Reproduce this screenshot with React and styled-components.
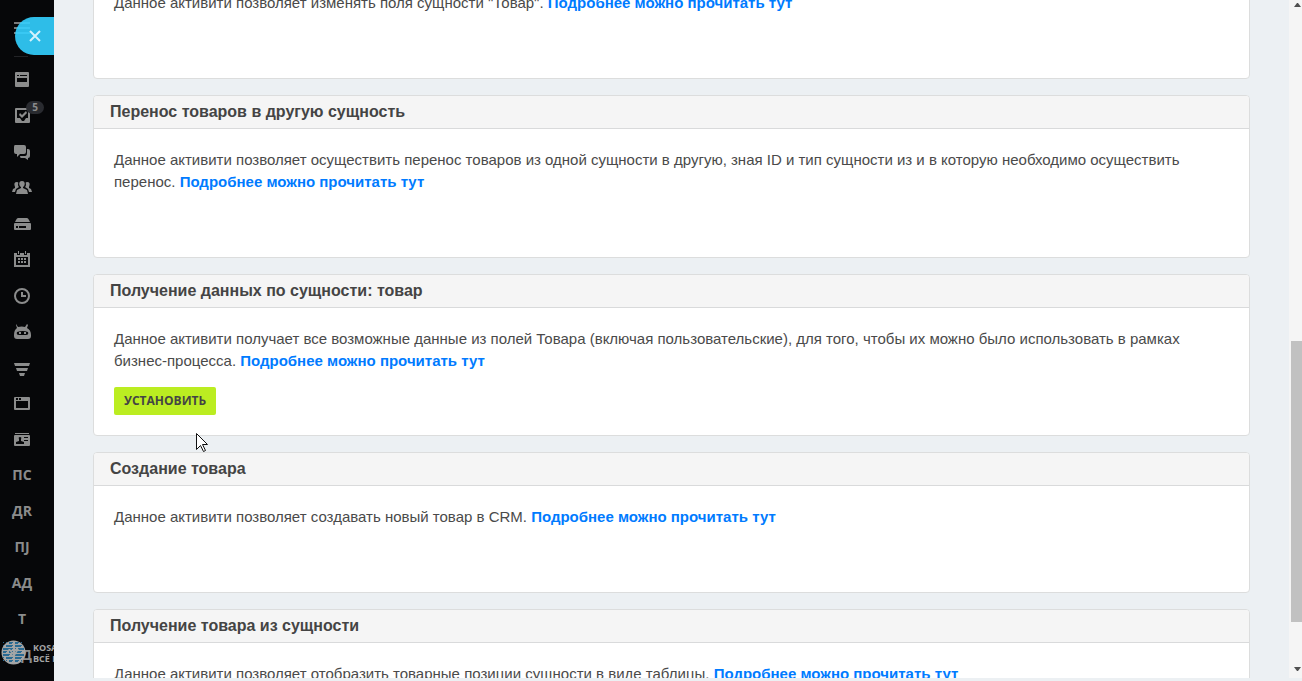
import React from "react";
import styled, { createGlobalStyle } from "styled-components";

const GlobalStyle = createGlobalStyle`
  * {
    box-sizing: border-box;
  }

  body {
    margin: 0;
    background-color: #ecf0f3;
    font-family: "Liberation Sans", Arial, sans-serif;
    color: #444;
  }
`;

const Page = styled.div`
  display: flex;
  height: 100vh;
  overflow: hidden;
`;

const Sidebar = styled.nav`
  position: relative;
  flex: none;
  width: 54px;
  overflow: hidden;
  background-color: #060709;
`;

const MenuButton = styled.button`
  display: block;
  width: 44px;
  height: 57px;
  padding: 0 0 0 14px;
  border: none;
  background: none;
`;

const CloseButton = styled.button`
  position: absolute;
  top: 17px;
  right: 0;
  display: flex;
  align-items: center;
  width: 39px;
  height: 38px;
  padding: 0 0 0 14px;
  border: none;
  border-radius: 19px 0 0 19px;
  background-color: rgba(51, 208, 255, 0.91);
`;

const Menu = styled.ul`
  margin: 5px 0 0;
  padding: 0;
  list-style: none;
`;

const MenuLink = styled.a`
  position: relative;
  display: flex;
  align-items: center;
  justify-content: center;
  width: 44px;
  height: 36px;
  color: #8b8c8c;
  text-decoration: none;
`;

const MenuText = styled.span`
  padding-bottom: 2px;
  font: 700 14px/20px "Open Sans", sans-serif;
`;

const Badge = styled.span`
  position: absolute;
  top: 3px;
  left: 26px;
  width: 18px;
  border-radius: 7px;
  background-color: #292b30;
  color: #8b8c8c;
  font: 700 10px/13px "Open Sans", sans-serif;
  text-align: center;
`;

const Brand = styled.a`
  position: absolute;
  bottom: 16px;
  left: 1px;
  display: flex;
  align-items: center;
  gap: 7px;
  color: #a3a4a5;
  font: 700 9px/11px "Open Sans", sans-serif;
  text-decoration: none;
  white-space: nowrap;
`;

const Content = styled.main`
  flex: 1;
  min-width: 0;
  margin-bottom: 3px;
  padding: 0 39px;
  overflow: hidden;
`;

const CardList = styled.div`
  display: flex;
  flex-direction: column;
  gap: 16px;
  margin-top: -29px;
`;

const CardBox = styled.section`
  flex: none;
  border: 1px solid #dcdddd;
  border-radius: 4px;
  background-color: #fff;
`;

const CardTitle = styled.h2`
  margin: 0;
  padding: 5px 16px;
  border-bottom: 1px solid #d9dadb;
  border-radius: 3px 3px 0 0;
  background-color: #f5f5f5;
  font-size: 16px;
  line-height: 22px;
`;

const CardBody = styled.div`
  padding: 20px;
  color: #4a4a4a;
  font-size: 15px;
  line-height: 22px;
`;

const Text = styled.p`
  margin: 0;
`;

const Link = styled.a`
  color: #007bff;
  font-weight: bold;
  text-decoration: none;
`;

const Spacer = styled.div`
  height: 44px;
`;

const InstallButton = styled.button`
  display: block;
  height: 28px;
  margin-top: 15px;
  padding: 0 10px 1px;
  border: none;
  border-radius: 2px;
  background-color: #bbed21;
  color: #444;
  font: 700 12px "Open Sans", sans-serif;
  text-transform: uppercase;
`;

const Scrollbar = styled.div`
  display: flex;
  flex-direction: column;
  align-items: flex-end;
  flex: none;
  width: 13px;
  margin-bottom: 3px;
  background-color: #f5f5f5;
`;

const ScrollArrow = styled.svg`
  flex: none;
  display: block;
  width: 11px;
  height: 11px;
  fill: #505050;
`;

const ScrollTrack = styled.div`
  display: flex;
  flex-direction: column;
  flex: 1;
`;

const ScrollSpace = styled.div`
  flex: ${props => props.$size} 0 0;
`;

const ScrollThumb = styled.div`
  flex: 281 0 0;
  width: 11px;
  background-color: #c1c1c1;
`;

const Cursor = styled.svg`
  position: absolute;
  top: 433px;
  left: 196px;
`;

// every glyph is drawn on a 20x20 field
const icons = {
  feed: (
    <path
      fillRule="evenodd"
      d="M4 2h12a1 1 0 0 1 1 1v13a1 1 0 0 1-1 1H4a1 1 0 0 1-1-1V3a1 1 0 0 1 1-1zm1 3v1h2V5zm3 0v1h7V5zM5 8v4h10V8z"
    />
  ),
  tasks: (
    <path
      fillRule="evenodd"
      d="M4 2h13a1 1 0 0 1 1 1v13a1 1 0 0 1-1 1H4a1 1 0 0 1-1-1V3a1 1 0 0 1 1-1zm1 2v8h3l2 3h2l2-3h2V4zm3 3 2 2 4-4 1 2-5 5-3-3z"
    />
  ),
  chat: (
    <path d="M3 3h9q2 0 2 2v5q0 2-2 2H8l-3 3v-3H4q-2 0-2-2V5q0-2 1-2zm12 4h1q2 0 2 2v5q0 2-2 2v2l-3-2H9q-1 0-1-2h5q2 0 2-3z" />
  ),
  people: (
    <path d="M10 3c4 0 3 5 1 6v1l4 2 1 4H4l1-4 4-2V9C7 8 6 3 10 3zM5 4q2 0 1 2 0 3 1 3l-3 2-1 3H0l1-3 2-1V9Q1 4 5 4zm10 0q4 0 2 5v1l2 1 1 3h-3l-1-3-3-2q1 0 1-3-1-2 1-2z" />
  ),
  drive: (
    <path
      fillRule="evenodd"
      d="M6 4h9q1 0 2 2l1 2H3l1-2q1-2 2-2zM3 9h15q1 0 1 1v5q0 1-1 1H3q-1 0-1-1v-5q0-1 1-1zm1 3v2h2v-2zm3 0v2h7v-2z"
    />
  ),
  calendar: (
    <path
      fillRule="evenodd"
      d="M2 3h3v2h3V3h4v2h3V3h3v14H2zm2 4v8h12V7zM6 1h1v3H6zm7 0h1v3h-1zM6 8h2v2H6zm3 0h2v2H9zm3 0h2v2h-2zM6 11h2v2H6zm3 0h2v2H9zm3 0h2v2h-2z"
    />
  ),
  clock: (
    <>
      <circle cx="10" cy="10" r="7" fill="none" stroke="currentColor" strokeWidth="2" />
      <path d="M9 6h2v3h3v2H9z" />
    </>
  ),
  robot: (
    <path
      fillRule="evenodd"
      d="m4 2 2 3q4-1 7 0l2-3 1 1-1 3q4 2 4 7v1q0 3-3 3H5q-3 0-3-3v-1q0-5 3-7L4 3zm1 8q-1 3 2 3h7q3 0 2-3-5-2-11 0zm2 0h2v2H7zm5 0h2v2h-2z"
    />
  ),
  filter: <path d="M2 5h16l-1 3H3zm2 5h12l-1 3H5zm3 5h6l-1 3H8z" />,
  window: (
    <path
      fillRule="evenodd"
      d="M3 3h14q1 0 1 1v11q0 1-1 1H3q-1 0-1-1V4q0-1 1-1zm1 1v2h2V4zm3 0v2h2V4zM4 7v7h12V7z"
    />
  ),
  contact: (
    <path
      fillRule="evenodd"
      d="M3 3h14v1H3zm0 2h14q1 0 1 1v9q0 1-1 1H3q-1 0-1-1V6q0-1 1-1zm1 9h8v-2l-3-1V9q1-2-1-2t-1 2v2l-3 1zm8-7v1h4V7zm0 3v1h4v-1z"
    />
  )
};

const menuItems = [
  { icon: "feed", label: "Новости" },
  { icon: "tasks", label: "Задачи", badge: 5 },
  { icon: "chat", label: "Чат" },
  { icon: "people", label: "Группы" },
  { icon: "drive", label: "Диск" },
  { icon: "calendar", label: "Календарь" },
  { icon: "clock", label: "Время" },
  { icon: "robot", label: "Роботы" },
  { icon: "filter", label: "CRM" },
  { icon: "window", label: "Сайты" },
  { icon: "contact", label: "Контакты" },
  { text: "ПС" },
  { text: "ДR" },
  { text: "ПJ" },
  { text: "АД" },
  { text: "Т" },
  { text: "УД" }
];

const cards = [
  {
    text: 'Данное активити позволяет изменять поля сущности "Товар".'
  },
  {
    title: "Перенос товаров в другую сущность",
    text:
      "Данное активити позволяет осуществить перенос товаров из одной сущности в другую, зная ID и тип сущности из и в которую необходимо осуществить перенос."
  },
  {
    title: "Получение данных по сущности: товар",
    text:
      "Данное активити получает все возможные данные из полей Товара (включая пользовательские), для того, чтобы их можно было использовать в рамках бизнес-процесса.",
    install: true
  },
  {
    title: "Создание товара",
    text: "Данное активити позволяет создавать новый товар в CRM."
  },
  {
    title: "Получение товара из сущности",
    text: "Данное активити позволяет отобразить товарные позиции сущности в виде таблицы."
  }
];

// dots of the brand globe, one string per row
const globe = ["..#.#..", ".##.##.", "###..##", "#.#.##.", "##..###", ".##.##.", "..#.#.."];

const MenuItem = ({ icon, label, text, badge }) => (
  <li>
    <MenuLink href="#" aria-label={label}>
      {icon ? (
        <svg width="20" height="20" viewBox="0 0 20 20" fill="currentColor">
          {icons[icon]}
        </svg>
      ) : (
        <MenuText>{text}</MenuText>
      )}
      {badge ? <Badge>{badge}</Badge> : null}
    </MenuLink>
  </li>
);

const Card = ({ title, text, install }) => (
  <CardBox>
    {title ? <CardTitle>{title}</CardTitle> : null}
    <CardBody>
      <Text>
        {text} <Link href="#">Подробнее можно прочитать тут</Link>
      </Text>
      {install ? <InstallButton>Установить</InstallButton> : <Spacer />}
    </CardBody>
  </CardBox>
);

const App = () => {
  return (
    <Page>
      <GlobalStyle />
      <Sidebar>
        <MenuButton aria-label="Меню">
          <svg width="17" height="57" viewBox="0 0 17 57" display="block">
            <path d="M0 22h16v2H0zm0 5h16v2H0zm0 5h16v2H0z" fill="#77797a" />
            <path d="M0 56h14v1H0z" fill="#222326" />
          </svg>
        </MenuButton>
        <Menu>
          {menuItems.map((e, i) => (
            <MenuItem key={i} {...e} />
          ))}
        </Menu>
        <Brand href="#">
          <svg width="25" height="25" viewBox="0 0 25 25">
            <circle cx="12.5" cy="12.5" r="12" fill="#a3a5a6" />
            {globe.map((row, y) =>
              row.split("").map((dot, x) => (
                <rect
                  key={`${x}-${y}`}
                  x={2 + x * 3}
                  y={2 + y * 3}
                  width={dot === "#" ? 3 : 1}
                  height={dot === "#" ? 2 : 1}
                  fill="#2a6a92"
                />
              ))
            )}
            <path d="m9 9 4 5 3-5h2l-5 8h-2l1-2-5-6z" fill="#a3a5a6" />
          </svg>
          <span>
            KOSA
            <br />
            ВСЁ ПО
          </span>
        </Brand>
        <CloseButton aria-label="Закрыть">
          <svg width="12" height="12" viewBox="0 0 12 12">
            <path d="m1 1 10 10M11 1 1 11" stroke="#d5f2fc" strokeWidth="2" />
          </svg>
        </CloseButton>
      </Sidebar>
      <Content>
        <CardList>
          {cards.map((e, i) => (
            <Card key={i} {...e} />
          ))}
        </CardList>
      </Content>
      <Scrollbar>
        <ScrollArrow viewBox="0 0 11 11">
          <path d="M3 7h7L7 3H6z" />
        </ScrollArrow>
        <ScrollTrack>
          <ScrollSpace $size={330} />
          <ScrollThumb />
          <ScrollSpace $size={45} />
        </ScrollTrack>
        <ScrollArrow viewBox="0 0 11 11">
          <path d="M3 0h7L7 4H6z" />
        </ScrollArrow>
      </Scrollbar>
      <Cursor width="13" height="20" viewBox="0 0 13 20">
        <path
          d="M.5.5v16l4-4 3 6 2-1-3-6h5z"
          fill="#fff"
          stroke="#111"
        />
      </Cursor>
    </Page>
  );
};

export default App;
